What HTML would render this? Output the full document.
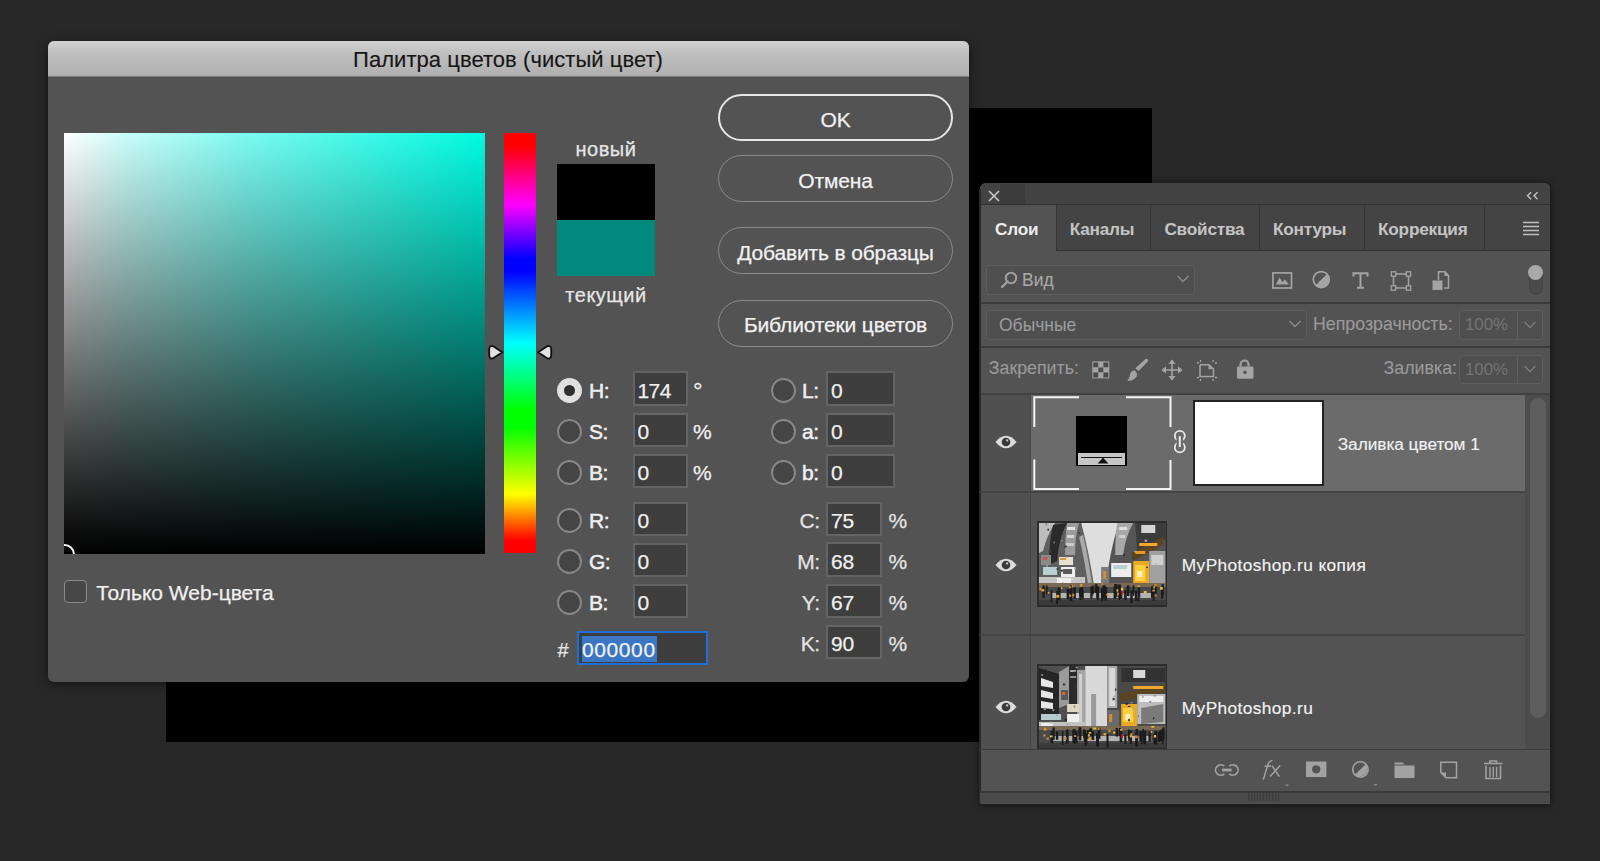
<!DOCTYPE html>
<html><head><meta charset="utf-8">
<style>
*{margin:0;padding:0;box-sizing:border-box}
html,body{width:1600px;height:861px;overflow:hidden;background:#282828;font-family:"Liberation Sans",sans-serif}
.a{position:absolute}
.t{position:absolute;white-space:nowrap;line-height:1}
</style></head><body>
<div class="a" style="left:166px;top:108px;width:986.00px;height:634.00px;background:#000"></div>
<div class="a" style="left:48px;top:41px;width:921px;height:641px;background:#535353;border-radius:6px;box-shadow:0 2px 12px rgba(0,0,0,.55)"></div>
<div class="a" style="left:48px;top:41px;width:921px;height:36px;background:linear-gradient(#d2d2d2,#bdbdbd 40%,#b0b0b0);border-radius:6px 6px 0 0;border-bottom:1px solid #7d7d7d"></div>
<div class="t" style="left:47.50px;top:49.48px;font-size:22px;color:#161616;letter-spacing:0.05px;-webkit-text-stroke:0.15px #161616;width:921px;text-align:center;">Палитра цветов (чистый цвет)</div>
<div class="a" style="left:64px;top:133px;width:421px;height:421px;background:linear-gradient(to top,#000,rgba(0,0,0,0)),linear-gradient(to right,#fff 0%,rgb(200,253,249) 15%,rgb(120,250,240) 45%,rgb(0,250,225) 100%);overflow:hidden"><div class="a" style="left:-10.5px;top:410.5px;width:21px;height:21px;border-radius:50%;border:2px solid #f4f4f4"></div></div>
<div class="a" style="left:504px;top:133px;width:32.00px;height:420.00px;background:linear-gradient(to bottom,#f00 0%,#f00 3%,#f0f 17%,#00f 30%,#00f 33%,#0ff 50%,#0f0 66%,#0f0 70%,#ff0 86%,#f00 97%,#f00 100%)"></div>
<svg class="a" style="left:486px;top:342px" width="70" height="20"><path d="M3.2 7.5 Q3.2 3.6 6.8 4 L16.3 10.3 L6.8 16.6 Q3.2 17 3.2 13.1 Z" fill="#e2e2e2" stroke="#111" stroke-width="1.8" stroke-linejoin="round"/><path d="M65.2 7.5 Q65.2 3.6 61.6 4 L52.1 10.3 L61.6 16.6 Q65.2 17 65.2 13.1 Z" fill="#e2e2e2" stroke="#111" stroke-width="1.8" stroke-linejoin="round"/></svg>
<div class="t" style="left:557.00px;top:138.67px;font-size:20px;color:#e6e6e6;letter-spacing:0.5px;-webkit-text-stroke:0.25px #e6e6e6;width:98px;text-align:center;">новый</div>
<div class="a" style="left:557px;top:164px;width:98.00px;height:56.00px;background:#000"></div>
<div class="a" style="left:557px;top:220px;width:98.00px;height:56.00px;background:#008a7d"></div>
<div class="t" style="left:537.00px;top:284.57px;font-size:20px;color:#e6e6e6;letter-spacing:0.5px;-webkit-text-stroke:0.25px #e6e6e6;width:138px;text-align:center;">текущий</div>
<div class="a" style="left:718px;top:94px;width:235px;height:47px;border:2px solid #e6e6e6;border-radius:24px"></div>
<div class="t" style="left:718.00px;top:108.82px;font-size:21px;color:#f2f2f2;letter-spacing:-0.15px;-webkit-text-stroke:0.25px #f2f2f2;width:235px;text-align:center;">OK</div>
<div class="a" style="left:718px;top:155px;width:235px;height:47px;border:1.8px solid #8a8a8a;border-radius:24px"></div>
<div class="t" style="left:718.00px;top:169.82px;font-size:21px;color:#f2f2f2;letter-spacing:-0.15px;-webkit-text-stroke:0.25px #f2f2f2;width:235px;text-align:center;">Отмена</div>
<div class="a" style="left:718px;top:227px;width:235px;height:47px;border:1.8px solid #8a8a8a;border-radius:24px"></div>
<div class="t" style="left:718.00px;top:241.82px;font-size:21px;color:#f2f2f2;letter-spacing:-0.15px;-webkit-text-stroke:0.25px #f2f2f2;width:235px;text-align:center;">Добавить в образцы</div>
<div class="a" style="left:718px;top:299.5px;width:235px;height:47px;border:1.8px solid #8a8a8a;border-radius:24px"></div>
<div class="t" style="left:718.00px;top:314.32px;font-size:21px;color:#f2f2f2;letter-spacing:-0.15px;-webkit-text-stroke:0.25px #f2f2f2;width:235px;text-align:center;">Библиотеки цветов</div>
<div class="a" style="left:556.8px;top:377.5px;width:25px;height:25px;border-radius:50%;background:#e0e0e0"></div>
<div class="a" style="left:563.8px;top:384.5px;width:11px;height:11px;border-radius:50%;background:#2e2e2e"></div>
<div class="t" style="left:589.00px;top:380.02px;font-size:21px;color:#f0f0f0;letter-spacing:-0.5px;-webkit-text-stroke:0.5px #f0f0f0;">H:</div>
<div class="a" style="left:632.5px;top:371.3px;width:55.5px;height:34.4px;background:#3e3e3e;border:2px solid #646464"></div>
<div class="t" style="left:637.50px;top:380.02px;font-size:21px;color:#f0f0f0;letter-spacing:-0.6px;-webkit-text-stroke:0.25px #f0f0f0;">174</div>
<div class="t" style="left:693.00px;top:379.48px;font-size:24px;color:#f0f0f0;-webkit-text-stroke:0.25px #f0f0f0;">°</div>
<div class="a" style="left:556.8px;top:418.5px;width:25px;height:25px;border-radius:50%;background:#454545;border:2px solid #878787"></div>
<div class="t" style="left:589.00px;top:421.02px;font-size:21px;color:#f0f0f0;letter-spacing:-0.5px;-webkit-text-stroke:0.5px #f0f0f0;">S:</div>
<div class="a" style="left:632.5px;top:413px;width:55.5px;height:34.4px;background:#3e3e3e;border:2px solid #646464"></div>
<div class="t" style="left:637.50px;top:421.02px;font-size:21px;color:#f0f0f0;letter-spacing:-0.6px;-webkit-text-stroke:0.25px #f0f0f0;">0</div>
<div class="t" style="left:693.00px;top:421.02px;font-size:21px;color:#f0f0f0;-webkit-text-stroke:0.25px #f0f0f0;">%</div>
<div class="a" style="left:556.8px;top:459.5px;width:25px;height:25px;border-radius:50%;background:#454545;border:2px solid #878787"></div>
<div class="t" style="left:589.00px;top:462.02px;font-size:21px;color:#f0f0f0;letter-spacing:-0.5px;-webkit-text-stroke:0.5px #f0f0f0;">B:</div>
<div class="a" style="left:632.5px;top:454px;width:55.5px;height:34.4px;background:#3e3e3e;border:2px solid #646464"></div>
<div class="t" style="left:637.50px;top:462.02px;font-size:21px;color:#f0f0f0;letter-spacing:-0.6px;-webkit-text-stroke:0.25px #f0f0f0;">0</div>
<div class="t" style="left:693.00px;top:462.02px;font-size:21px;color:#f0f0f0;-webkit-text-stroke:0.25px #f0f0f0;">%</div>
<div class="a" style="left:556.8px;top:507.5px;width:25px;height:25px;border-radius:50%;background:#454545;border:2px solid #878787"></div>
<div class="t" style="left:589.00px;top:509.82px;font-size:21px;color:#f0f0f0;letter-spacing:-0.5px;-webkit-text-stroke:0.5px #f0f0f0;">R:</div>
<div class="a" style="left:632.5px;top:501.6px;width:55.5px;height:34.4px;background:#3e3e3e;border:2px solid #646464"></div>
<div class="t" style="left:637.50px;top:509.82px;font-size:21px;color:#f0f0f0;letter-spacing:-0.6px;-webkit-text-stroke:0.25px #f0f0f0;">0</div>
<div class="a" style="left:556.8px;top:548.5px;width:25px;height:25px;border-radius:50%;background:#454545;border:2px solid #878787"></div>
<div class="t" style="left:589.00px;top:550.92px;font-size:21px;color:#f0f0f0;letter-spacing:-0.5px;-webkit-text-stroke:0.5px #f0f0f0;">G:</div>
<div class="a" style="left:632.5px;top:542.5px;width:55.5px;height:34.4px;background:#3e3e3e;border:2px solid #646464"></div>
<div class="t" style="left:637.50px;top:550.92px;font-size:21px;color:#f0f0f0;letter-spacing:-0.6px;-webkit-text-stroke:0.25px #f0f0f0;">0</div>
<div class="a" style="left:556.8px;top:589.5px;width:25px;height:25px;border-radius:50%;background:#454545;border:2px solid #878787"></div>
<div class="t" style="left:589.00px;top:591.82px;font-size:21px;color:#f0f0f0;letter-spacing:-0.5px;-webkit-text-stroke:0.5px #f0f0f0;">B:</div>
<div class="a" style="left:632.5px;top:583.6px;width:55.5px;height:34.4px;background:#3e3e3e;border:2px solid #646464"></div>
<div class="t" style="left:637.50px;top:591.82px;font-size:21px;color:#f0f0f0;letter-spacing:-0.6px;-webkit-text-stroke:0.25px #f0f0f0;">0</div>
<div class="a" style="left:770.5px;top:377.5px;width:25px;height:25px;border-radius:50%;background:#454545;border:2px solid #878787"></div>
<div class="t" style="left:802.00px;top:380.02px;font-size:21px;color:#f0f0f0;letter-spacing:-0.5px;-webkit-text-stroke:0.5px #f0f0f0;">L:</div>
<div class="a" style="left:826px;top:371.3px;width:69px;height:34.4px;background:#3e3e3e;border:2px solid #646464"></div>
<div class="t" style="left:831.00px;top:380.02px;font-size:21px;color:#f0f0f0;-webkit-text-stroke:0.25px #f0f0f0;">0</div>
<div class="a" style="left:770.5px;top:418.5px;width:25px;height:25px;border-radius:50%;background:#454545;border:2px solid #878787"></div>
<div class="t" style="left:802.00px;top:421.02px;font-size:21px;color:#f0f0f0;letter-spacing:-0.5px;-webkit-text-stroke:0.5px #f0f0f0;">a:</div>
<div class="a" style="left:826px;top:413px;width:69px;height:34.4px;background:#3e3e3e;border:2px solid #646464"></div>
<div class="t" style="left:831.00px;top:421.02px;font-size:21px;color:#f0f0f0;-webkit-text-stroke:0.25px #f0f0f0;">0</div>
<div class="a" style="left:770.5px;top:459.5px;width:25px;height:25px;border-radius:50%;background:#454545;border:2px solid #878787"></div>
<div class="t" style="left:802.00px;top:462.02px;font-size:21px;color:#f0f0f0;letter-spacing:-0.5px;-webkit-text-stroke:0.5px #f0f0f0;">b:</div>
<div class="a" style="left:826px;top:454px;width:69px;height:34.4px;background:#3e3e3e;border:2px solid #646464"></div>
<div class="t" style="left:831.00px;top:462.02px;font-size:21px;color:#f0f0f0;-webkit-text-stroke:0.25px #f0f0f0;">0</div>
<div class="t" style="left:700.00px;top:509.82px;font-size:21px;color:#e4e4e4;letter-spacing:-0.5px;-webkit-text-stroke:0.25px #e4e4e4;width:119.5px;text-align:right;">C:</div>
<div class="a" style="left:826.4px;top:501.5px;width:56px;height:34.4px;background:#3e3e3e;border:2px solid #646464"></div>
<div class="t" style="left:831.00px;top:509.82px;font-size:21px;color:#f0f0f0;letter-spacing:-0.3px;-webkit-text-stroke:0.25px #f0f0f0;">75</div>
<div class="t" style="left:888.50px;top:509.82px;font-size:21px;color:#e4e4e4;-webkit-text-stroke:0.25px #e4e4e4;">%</div>
<div class="t" style="left:700.00px;top:550.92px;font-size:21px;color:#e4e4e4;letter-spacing:-0.5px;-webkit-text-stroke:0.25px #e4e4e4;width:119.5px;text-align:right;">M:</div>
<div class="a" style="left:826.4px;top:542.3px;width:56px;height:34.4px;background:#3e3e3e;border:2px solid #646464"></div>
<div class="t" style="left:831.00px;top:550.92px;font-size:21px;color:#f0f0f0;letter-spacing:-0.3px;-webkit-text-stroke:0.25px #f0f0f0;">68</div>
<div class="t" style="left:888.50px;top:550.92px;font-size:21px;color:#e4e4e4;-webkit-text-stroke:0.25px #e4e4e4;">%</div>
<div class="t" style="left:700.00px;top:591.82px;font-size:21px;color:#e4e4e4;letter-spacing:-0.5px;-webkit-text-stroke:0.25px #e4e4e4;width:119.5px;text-align:right;">Y:</div>
<div class="a" style="left:826.4px;top:583.5px;width:56px;height:34.4px;background:#3e3e3e;border:2px solid #646464"></div>
<div class="t" style="left:831.00px;top:591.82px;font-size:21px;color:#f0f0f0;letter-spacing:-0.3px;-webkit-text-stroke:0.25px #f0f0f0;">67</div>
<div class="t" style="left:888.50px;top:591.82px;font-size:21px;color:#e4e4e4;-webkit-text-stroke:0.25px #e4e4e4;">%</div>
<div class="t" style="left:700.00px;top:633.22px;font-size:21px;color:#e4e4e4;letter-spacing:-0.5px;-webkit-text-stroke:0.25px #e4e4e4;width:119.5px;text-align:right;">K:</div>
<div class="a" style="left:826.4px;top:625px;width:56px;height:34.4px;background:#3e3e3e;border:2px solid #646464"></div>
<div class="t" style="left:831.00px;top:633.22px;font-size:21px;color:#f0f0f0;letter-spacing:-0.3px;-webkit-text-stroke:0.25px #f0f0f0;">90</div>
<div class="t" style="left:888.50px;top:633.22px;font-size:21px;color:#e4e4e4;-webkit-text-stroke:0.25px #e4e4e4;">%</div>
<div class="t" style="left:557.50px;top:640.07px;font-size:20px;color:#e4e4e4;-webkit-text-stroke:0.25px #e4e4e4;">#</div>
<div class="a" style="left:576.7px;top:630.7px;width:131.3px;height:34.5px;background:#3e3e3e;border:2px solid #1e6fdc"></div>
<div class="a" style="left:581.6px;top:636.2px;width:75.40px;height:25.80px;background:#3a76c3"></div>
<div class="t" style="left:582.00px;top:639.22px;font-size:21px;color:#f2f2f2;letter-spacing:0.6px;-webkit-text-stroke:0.25px #f2f2f2;">000000</div>
<div class="a" style="left:64px;top:580px;width:23px;height:23px;border-radius:4px;background:#474747;border:1.5px solid #8a8a8a"></div>
<div class="t" style="left:96.30px;top:581.72px;font-size:21px;color:#f0f0f0;-webkit-text-stroke:0.25px #f0f0f0;">Только Web-цвета</div>
<div class="a" style="left:980px;top:183px;width:570px;height:621px;background:#535353;border-radius:6px 6px 0 0;box-shadow:0 1px 8px rgba(0,0,0,.6);overflow:hidden"></div>
<div class="a" style="left:980px;top:182.5px;width:570.00px;height:22.50px;background:#434343;border-radius:6px 6px 0 0;border-bottom:1px solid #313131"></div>
<div class="a" style="left:1000px;top:184px;width:25.00px;height:20.00px;background:#3c3c3c"></div>
<svg class="a" style="left:986px;top:188px" width="16" height="16"><path d="M3 3 L13 13 M13 3 L3 13" stroke="#c8c8c8" stroke-width="1.6"/></svg>
<svg class="a" style="left:1525px;top:190px" width="16" height="12"><path d="M6 2.3 L2.5 5.8 L6 9.3 M12.5 2.3 L9 5.8 L12.5 9.3" stroke="#c8c8c8" stroke-width="1.3" fill="none"/></svg>
<div class="a" style="left:980px;top:205px;width:570.00px;height:46.00px;background:#444444;border-bottom:1px solid #333"></div>
<div class="a" style="left:980px;top:205px;width:75.60px;height:46.00px;background:#535353"></div>
<div class="a" style="left:1150.3px;top:205px;width:1.00px;height:45.00px;background:#363636"></div>
<div class="a" style="left:1259.4px;top:205px;width:1.00px;height:45.00px;background:#363636"></div>
<div class="a" style="left:1364.4px;top:205px;width:1.00px;height:45.00px;background:#363636"></div>
<div class="a" style="left:1484.4px;top:205px;width:1.00px;height:45.00px;background:#363636"></div>
<div class="a" style="left:1055.6px;top:205px;width:1.00px;height:46.00px;background:#363636"></div>
<div class="t" style="left:995.00px;top:221.14px;font-size:17.2px;color:#ececec;font-weight:700;letter-spacing:-0.2px;">Слои</div>
<div class="t" style="left:1069.70px;top:221.14px;font-size:17.2px;color:#c4c4c4;font-weight:700;letter-spacing:-0.2px;">Каналы</div>
<div class="t" style="left:1164.40px;top:221.14px;font-size:17.2px;color:#c4c4c4;font-weight:700;letter-spacing:-0.2px;">Свойства</div>
<div class="t" style="left:1273.00px;top:221.14px;font-size:17.2px;color:#c4c4c4;font-weight:700;letter-spacing:-0.2px;">Контуры</div>
<div class="t" style="left:1378.00px;top:221.14px;font-size:17.2px;color:#c4c4c4;font-weight:700;letter-spacing:-0.2px;">Коррекция</div>
<svg class="a" style="left:1522px;top:220px" width="18" height="16"><path d="M1 2.5 H17 M1 6.5 H17 M1 10.5 H17 M1 14.5 H17" stroke="#c0c0c0" stroke-width="1.5"/></svg>
<div class="a" style="left:980px;top:302.3px;width:570.00px;height:1.70px;background:#3b3b3b"></div>
<div class="a" style="left:980px;top:346.3px;width:570.00px;height:1.70px;background:#3b3b3b"></div>
<div class="a" style="left:986.4px;top:265px;width:208.6px;height:30px;border:1px solid #5e5e5e;border-radius:4px;background:#4f4f4f"></div>
<svg class="a" style="left:999px;top:270px" width="22" height="20"><circle cx="12" cy="8" r="5.2" stroke="#a0a0a0" stroke-width="2" fill="none"/><path d="M8.5 11.5 L3 17" stroke="#a0a0a0" stroke-width="2.4" stroke-linecap="round"/></svg>
<div class="t" style="left:1022.00px;top:271.69px;font-size:17.5px;color:#a8a8a8;-webkit-text-stroke:0.1px #a8a8a8;">Вид</div>
<svg class="a" style="left:1176px;top:274px" width="14" height="10"><path d="M1.5 2 L7 7.5 L12.5 2" stroke="#8a8a8a" stroke-width="1.4" fill="none"/></svg>
<svg class="a" style="left:1268px;top:266px" width="190" height="28"><rect x="4.9" y="6.9" width="18.6" height="15.1" stroke="#a4a4a4" stroke-width="1.7" fill="none"/><path d="M8 18.6 L11.5 11.6 L14.6 16.2 L16.8 13.2 L21 18.6 Z" fill="#a4a4a4"/><circle cx="53.3" cy="13.6" r="8" stroke="#a4a4a4" stroke-width="1.7" fill="none"/><path d="M59 7.9 A8 8 0 0 1 47.6 19.3 Z" fill="#a4a4a4"/><path d="M85.5 10.5 V7.2 H99.5 V10.5 M92.5 7.2 V21.5 M89 21.8 H96" stroke="#a4a4a4" stroke-width="2" fill="none"/><rect x="125.5" y="8" width="15" height="14" stroke="#a4a4a4" stroke-width="1.5" fill="none"/><rect x="123.3" y="5.8" width="4.4" height="4.4" fill="#535353" stroke="#a4a4a4" stroke-width="1.3"/><rect x="138.3" y="5.8" width="4.4" height="4.4" fill="#535353" stroke="#a4a4a4" stroke-width="1.3"/><rect x="123.3" y="19.8" width="4.4" height="4.4" fill="#535353" stroke="#a4a4a4" stroke-width="1.3"/><rect x="138.3" y="19.8" width="4.4" height="4.4" fill="#535353" stroke="#a4a4a4" stroke-width="1.3"/><path d="M170.5 14 V5.8 H177 L180.5 9.5 V22 H176" stroke="#a4a4a4" stroke-width="1.5" fill="none"/><path d="M176.5 5.8 V10 H180.5 Z" fill="#a4a4a4"/><rect x="164.5" y="14.5" width="10" height="9.5" fill="#a4a4a4"/></svg>
<div class="a" style="left:1528.5px;top:265.5px;width:14.5px;height:29px;border-radius:7.5px;background:#4a4a4a;border:1px solid #444"></div>
<div class="a" style="left:1528px;top:264.5px;width:15px;height:15px;border-radius:50%;background:#a9a9a9"></div>
<div class="a" style="left:986.4px;top:309.5px;width:320.6px;height:30px;border:1px solid #5e5e5e;border-radius:4px;background:#4f4f4f"></div>
<div class="t" style="left:999.00px;top:316.69px;font-size:17.5px;color:#9c9c9c;-webkit-text-stroke:0.1px #9c9c9c;">Обычные</div>
<svg class="a" style="left:1288px;top:319px" width="14" height="10"><path d="M1.5 2 L7 7.5 L12.5 2" stroke="#8a8a8a" stroke-width="1.4" fill="none"/></svg>
<div class="t" style="left:1313.00px;top:316.43px;font-size:17.8px;color:#9a9a9a;-webkit-text-stroke:0.1px #9a9a9a;">Непрозрачность:</div>
<div class="a" style="left:1459px;top:310px;width:84px;height:29.5px;border:1px solid #5e5e5e;border-radius:4px;background:#4f4f4f"></div>
<div class="a" style="left:1517.4px;top:311px;width:1.00px;height:27.50px;background:#5e5e5e"></div>
<div class="t" style="left:1465.00px;top:317.28px;font-size:16.8px;color:#747474;">100%</div>
<svg class="a" style="left:1523px;top:319.5px" width="14" height="10"><path d="M1.5 2 L7 7.5 L12.5 2" stroke="#7c7c7c" stroke-width="1.4" fill="none"/></svg>
<div class="t" style="left:988.80px;top:360.43px;font-size:17.8px;color:#9a9a9a;-webkit-text-stroke:0.1px #9a9a9a;">Закрепить:</div>
<div class="t" style="left:1383.60px;top:360.43px;font-size:17.8px;color:#9a9a9a;-webkit-text-stroke:0.1px #9a9a9a;">Заливка:</div>
<div class="a" style="left:1459px;top:354.8px;width:84px;height:29.5px;border:1px solid #5e5e5e;border-radius:4px;background:#4f4f4f"></div>
<div class="a" style="left:1517.4px;top:355.8px;width:1.00px;height:27.50px;background:#5e5e5e"></div>
<div class="t" style="left:1465.00px;top:362.08px;font-size:16.8px;color:#747474;">100%</div>
<svg class="a" style="left:1523px;top:364.3px" width="14" height="10"><path d="M1.5 2 L7 7.5 L12.5 2" stroke="#7c7c7c" stroke-width="1.4" fill="none"/></svg>
<svg class="a" style="left:1088px;top:356px" width="172" height="28"><rect x="4.3" y="5.4" width="17" height="17" fill="#a4a4a4"/><path d="M5.3 6.4 h4.9 v4.9 h-4.9 Z M15.4 6.4 h4.9 v4.9 h-4.9 Z M10.35 11.45 h4.9 v4.9 h-4.9 Z M5.3 16.5 h4.9 v4.9 h-4.9 Z M15.4 16.5 h4.9 v4.9 h-4.9 Z" fill="#4a4a4a"/><path d="M57.6 2.9 Q60.6 2.3 60 5.2 L50.6 15 L47.4 12.2 Z" fill="#a4a4a4"/><path d="M46.3 14.2 Q50 16.6 48.6 20.4 Q46.2 24.6 39.3 25 Q41.8 22.8 41.8 19.6 Q42 15.6 46.3 14.2 Z" fill="#a4a4a4"/><path d="M84 4 V24 M74 14 H94" stroke="#a4a4a4" stroke-width="1.6"/><path d="M84 3.5 L80.3 8 H87.7 Z M84 24.5 L80.3 20 H87.7 Z M73.5 14 L78 10.3 V17.7 Z M94.5 14 L90 10.3 V17.7 Z" fill="#a4a4a4"/><path d="M112 9 V20.5 H125.5 V13 L121 8.8 H112" stroke="#a4a4a4" stroke-width="1.5" fill="none"/><path d="M120.5 8.8 V13.2 H125.5 Z" fill="#a4a4a4"/><path d="M109 7 h2 M109 21.5 h2 M127 7 h2 M127 21.5 h2 M112.5 4 v2 M112.5 23 v2 M125 4 v2 M125 23 v2" stroke="#a4a4a4" stroke-width="1.3"/><path d="M152.5 10.5 V8.5 A4 4 0 0 1 160.5 8.5 V10.5" stroke="#a4a4a4" stroke-width="2.2" fill="none"/><rect x="149" y="10.5" width="16.5" height="12.3" rx="1.2" fill="#a4a4a4"/><circle cx="157" cy="16.3" r="1.7" fill="#535353"/></svg>
<svg width="0" height="0" style="position:absolute"><filter id="soft"><feGaussianBlur stdDeviation="0.45"/></filter></svg>
<div class="a" style="left:980px;top:393px;width:570.00px;height:1.50px;background:#414141"></div>
<div class="a" style="left:980px;top:394.5px;width:51.00px;height:96.50px;background:#505050"></div>
<div class="a" style="left:1031px;top:394.5px;width:494.00px;height:96.50px;background:#6b6b6b"></div>
<div class="a" style="left:980px;top:492.5px;width:50.00px;height:256.50px;background:#505050"></div>
<div class="a" style="left:1030px;top:394.5px;width:1.00px;height:354.50px;background:#474747"></div>
<div class="a" style="left:979px;top:189px;width:1.50px;height:615.00px;background:#2a2a2a"></div>
<div class="a" style="left:980px;top:491px;width:545.00px;height:1.50px;background:#444"></div>
<div class="a" style="left:980px;top:634px;width:545.00px;height:1.50px;background:#444"></div>
<div class="a" style="left:1525px;top:394.5px;width:25.00px;height:354.50px;background:#4c4c4c"></div>
<div class="a" style="left:1529.7px;top:397.5px;width:16px;height:320px;border-radius:8px;background:#5e5e5e"></div>
<svg class="a" style="left:993.8px;top:434.4px" width="24" height="16"><path d="M1.5 8 Q12 -4.6 22.5 8 Q12 20.6 1.5 8 Z" fill="#dcdcdc"/><circle cx="12" cy="8" r="4.3" fill="#3a3a3a"/><rect x="12.2" y="5.4" width="2" height="2" fill="#d0d0d0"/></svg>
<svg class="a" style="left:993.8px;top:556.5px" width="24" height="16"><path d="M1.5 8 Q12 -4.6 22.5 8 Q12 20.6 1.5 8 Z" fill="#dcdcdc"/><circle cx="12" cy="8" r="4.3" fill="#3a3a3a"/><rect x="12.2" y="5.4" width="2" height="2" fill="#d0d0d0"/></svg>
<svg class="a" style="left:993.8px;top:698.8px" width="24" height="16"><path d="M1.5 8 Q12 -4.6 22.5 8 Q12 20.6 1.5 8 Z" fill="#dcdcdc"/><circle cx="12" cy="8" r="4.3" fill="#3a3a3a"/><rect x="12.2" y="5.4" width="2" height="2" fill="#d0d0d0"/></svg>
<svg class="a" style="left:1032px;top:395px" width="141" height="96"><path d="M47 2.3 H2.3 V32 M2.3 64.5 V94 H47 M94 2.3 H138.5 V32 M138.5 65 V94 H94" stroke="#f4f4f4" stroke-width="2" fill="none"/></svg>
<div class="a" style="left:1076.3px;top:416px;width:50.40px;height:50.40px;background:#000"></div>
<div class="a" style="left:1078px;top:453.4px;width:47.20px;height:11.40px;background:#c6c6c6"></div>
<div class="a" style="left:1081.2px;top:457px;width:40.60px;height:1.40px;background:#111"></div>
<svg class="a" style="left:1096px;top:456px" width="14" height="9"><path d="M7 1.5 L12.3 7.6 H1.7 Z" fill="#111"/></svg>
<svg class="a" style="left:1172px;top:428px" width="16" height="28"><circle cx="7.8" cy="7.8" r="5" stroke="#ebebeb" stroke-width="1.8" fill="none"/><circle cx="7.8" cy="19.4" r="5" stroke="#ebebeb" stroke-width="1.8" fill="none"/><rect x="4.5" y="10.5" width="6.6" height="6.2" fill="#6b6b6b"/><path d="M7.8 8.2 V19" stroke="#ebebeb" stroke-width="2"/></svg>
<div class="a" style="left:1193.3px;top:399.8px;width:130.30px;height:85.90px;background:#fff;border:2px solid #222"></div>
<div class="t" style="left:1337.70px;top:435.96px;font-size:17.3px;color:#f2f2f2;letter-spacing:-0.05px;-webkit-text-stroke:0.15px #f2f2f2;">Заливка цветом 1</div>
<div class="a" style="left:1037.2px;top:521.2px;width:130.3px;height:86px;overflow:hidden"><svg class="a" style="left:0px;top:0px" width="130.3" height="86" viewBox="0 0 130 86" preserveAspectRatio="none"><defs><filter id="sf0" x="0" y="0" width="1" height="1"><feGaussianBlur stdDeviation="0.5"/></filter></defs><rect x="0" y="0" width="130" height="86" fill="#2c2c2c"/><g filter="url(#sf0)"><rect x="2.0" y="2.0" width="126.0" height="82.0" fill="#6a6a6a"/><path d="M44 2 H82 Q74 30 68 72 H58 Q52 30 44 2 Z" fill="#dedede"/><path d="M2 2 H44 Q50 30 56 72 H2 Z" fill="#5e5e5e"/><path d="M2 2 H18 Q10 14 6 30 L2 32 Z" fill="#bdbdbd"/><path d="M16 4 L30 2 Q22 16 20 40 L12 44 Q12 20 16 4 Z" fill="#2c2c2c"/><path d="M30 2 H42 Q38 14 38 34 H28 Q28 16 30 2 Z" fill="#9c9c9c"/><rect x="30.0" y="6.0" width="8.0" height="3.0" fill="#e4e4e4"/><rect x="30.0" y="14.0" width="7.0" height="3.0" fill="#d6d6d6"/><rect x="29.0" y="22.0" width="8.0" height="3.0" fill="#c8c8c8"/><path d="M46 14 Q52 40 56 72 H52 Q48 40 42 16 Z" fill="#aaaaaa"/><rect x="4.0" y="34.0" width="10.0" height="10.0" fill="#8a8a8a"/><rect x="6.0" y="36.0" width="4.0" height="3.0" fill="#d05050"/><rect x="22.0" y="36.0" width="14.0" height="8.0" fill="#e6e0d0"/><rect x="23.0" y="37.0" width="6.0" height="2.0" fill="#d89a40"/><rect x="24.0" y="46.0" width="14.0" height="10.0" fill="#f0f0f0"/><rect x="26.0" y="48.0" width="9.0" height="5.0" fill="#5a5a5a"/><rect x="6.0" y="46.0" width="14.0" height="8.0" fill="#b8d0d0"/><rect x="2.0" y="56.0" width="46.0" height="8.0" fill="#c6c6c6"/><rect x="20.0" y="57.0" width="14.0" height="5.0" fill="#eeeeee"/><path d="M82 2 H128 V72 H68 Q72 30 82 2 Z" fill="#545454"/><path d="M80 2 H96 Q88 16 86 34 H78 Q78 16 80 2 Z" fill="#a8a8a8"/><rect x="82.0" y="6.0" width="8.0" height="3.0" fill="#e0e0e0"/><rect x="82.0" y="14.0" width="6.0" height="3.0" fill="#cfcfcf"/><path d="M98 2 H128 V18 L100 30 Z" fill="#3a3a3a"/><rect x="104.0" y="4.0" width="14.0" height="8.0" fill="#d4d4d4"/><path d="M94 32 L126 16 V24 L96 40 Z" fill="#5a4420"/><rect x="102.0" y="22.0" width="18.0" height="3.0" fill="#f0a830"/><rect x="98.0" y="30.0" width="10.0" height="3.0" fill="#e89828"/><rect x="74.0" y="42.0" width="20.0" height="14.0" fill="#eeeeee"/><rect x="76.0" y="44.0" width="14.0" height="4.0" fill="#b8d2d2"/><rect x="96.0" y="40.0" width="16.0" height="26.0" fill="#e8aa28"/><rect x="98.0" y="44.0" width="10.0" height="16.0" fill="#ffd040"/><rect x="100.0" y="50.0" width="5.0" height="6.0" fill="#fbeec0"/><rect x="112.0" y="30.0" width="16.0" height="36.0" fill="#a0a0a0"/><rect x="114.0" y="34.0" width="12.0" height="10.0" fill="#cfcfcf"/><rect x="64.0" y="46.0" width="8.0" height="22.0" fill="#7a7a7a"/><rect x="66.0" y="50.0" width="3.0" height="8.0" fill="#d09030"/><rect x="41.5" y="11.1" width="1.1" height="1.8" fill="#2a2a2a"/><rect x="13.1" y="27.5" width="2.4" height="1.9" fill="#2a2a2a"/><rect x="29.0" y="35.4" width="1.4" height="1.2" fill="#8a8a8a"/><rect x="16.4" y="20.5" width="1.2" height="1.9" fill="#8a8a8a"/><rect x="24.9" y="7.8" width="1.8" height="1.9" fill="#2a2a2a"/><rect x="96.8" y="29.9" width="1.5" height="1.4" fill="#b0b0b0"/><rect x="23.9" y="48.8" width="1.9" height="1.8" fill="#2a2a2a"/><rect x="108.8" y="45.8" width="1.9" height="1.1" fill="#3c3c3c"/><rect x="43.7" y="58.0" width="1.1" height="2.0" fill="#b0b0b0"/><rect x="95.3" y="36.4" width="1.5" height="1.5" fill="#3c3c3c"/><rect x="10.4" y="7.6" width="1.7" height="2.0" fill="#3c3c3c"/><rect x="9.4" y="44.1" width="1.4" height="1.6" fill="#b0b0b0"/><rect x="83.6" y="3.4" width="1.5" height="1.9" fill="#b0b0b0"/><rect x="37.1" y="46.3" width="1.6" height="2.3" fill="#b0b0b0"/><rect x="11.8" y="29.0" width="2.3" height="2.2" fill="#3c3c3c"/><rect x="107.4" y="18.7" width="2.5" height="2.0" fill="#b0b0b0"/><rect x="12.1" y="11.1" width="1.0" height="2.2" fill="#8a8a8a"/><rect x="24.2" y="18.9" width="1.6" height="1.6" fill="#8a8a8a"/><rect x="86.2" y="32.9" width="1.7" height="2.3" fill="#2a2a2a"/><rect x="118.1" y="42.8" width="1.6" height="1.6" fill="#b0b0b0"/><rect x="25.3" y="61.1" width="1.2" height="1.5" fill="#b0b0b0"/><rect x="8.4" y="2.0" width="1.8" height="2.4" fill="#8a8a8a"/><rect x="27.4" y="24.6" width="2.4" height="1.9" fill="#3c3c3c"/><rect x="19.6" y="47.0" width="1.7" height="2.0" fill="#3c3c3c"/><rect x="2.0" y="64.0" width="126.0" height="20.0" fill="#4a4a4a"/><rect x="2.0" y="62.0" width="126.0" height="4.0" fill="#7a6a52"/><rect x="14.0" y="72.0" width="100.0" height="5.0" fill="#b4b4b4"/><rect x="2.0" y="79.0" width="126.0" height="5.0" fill="#3a3a3a"/><rect x="65.5" y="64.4" width="2.9" height="10.2" fill="#1e1e1e"/><rect x="86.9" y="69.4" width="2.6" height="9.8" fill="#1e1e1e"/><rect x="81.1" y="63.6" width="2.8" height="11.1" fill="#1e1e1e"/><rect x="113.7" y="65.5" width="1.8" height="11.2" fill="#1e1e1e"/><rect x="63.8" y="67.5" width="2.4" height="12.7" fill="#1e1e1e"/><rect x="95.3" y="64.4" width="1.9" height="10.4" fill="#1e1e1e"/><rect x="100.8" y="64.4" width="2.2" height="12.4" fill="#1e1e1e"/><rect x="123.7" y="68.5" width="2.2" height="9.2" fill="#1e1e1e"/><rect x="76.4" y="65.4" width="2.7" height="12.3" fill="#1e1e1e"/><rect x="45.0" y="69.8" width="1.6" height="8.6" fill="#1e1e1e"/><rect x="59.8" y="65.4" width="2.2" height="13.9" fill="#1e1e1e"/><rect x="77.1" y="63.0" width="2.9" height="10.1" fill="#1e1e1e"/><rect x="81.1" y="68.8" width="1.7" height="10.3" fill="#1e1e1e"/><rect x="89.5" y="64.4" width="2.8" height="10.6" fill="#1e1e1e"/><rect x="80.2" y="63.6" width="2.9" height="12.3" fill="#1e1e1e"/><rect x="59.0" y="68.2" width="1.6" height="9.0" fill="#1e1e1e"/><rect x="124.2" y="63.2" width="2.4" height="10.8" fill="#1e1e1e"/><rect x="82.7" y="67.3" width="2.4" height="10.8" fill="#1e1e1e"/><rect x="117.3" y="64.1" width="2.3" height="8.1" fill="#1e1e1e"/><rect x="100.3" y="68.1" width="1.7" height="12.5" fill="#1e1e1e"/><rect x="19.1" y="69.9" width="1.8" height="13.2" fill="#1e1e1e"/><rect x="5.4" y="64.5" width="2.3" height="12.6" fill="#1e1e1e"/><rect x="42.1" y="66.8" width="2.8" height="8.4" fill="#1e1e1e"/><rect x="93.0" y="69.3" width="2.5" height="12.9" fill="#1e1e1e"/><rect x="65.6" y="68.8" width="2.8" height="8.8" fill="#1e1e1e"/><rect x="20.7" y="66.6" width="2.8" height="12.7" fill="#1e1e1e"/><rect x="76.9" y="68.4" width="1.7" height="8.8" fill="#1e1e1e"/><rect x="78.1" y="63.8" width="1.6" height="12.1" fill="#1e1e1e"/><rect x="67.3" y="66.4" width="2.7" height="13.3" fill="#1e1e1e"/><rect x="9.0" y="64.3" width="1.6" height="8.6" fill="#1e1e1e"/><rect x="57.6" y="63.2" width="2.8" height="8.4" fill="#1e1e1e"/><rect x="42.1" y="69.8" width="2.4" height="9.2" fill="#1e1e1e"/><rect x="36.1" y="66.6" width="2.7" height="11.0" fill="#1e1e1e"/><rect x="32.5" y="66.7" width="2.8" height="13.6" fill="#1e1e1e"/><rect x="115.5" y="69.2" width="1.8" height="10.7" fill="#1e1e1e"/><rect x="53.2" y="65.7" width="2.0" height="12.0" fill="#1e1e1e"/><rect x="54.7" y="64.5" width="2.0" height="8.7" fill="#1e1e1e"/><rect x="97.6" y="69.6" width="2.5" height="10.2" fill="#1e1e1e"/><rect x="33.1" y="64.0" width="2.2" height="12.5" fill="#1e1e1e"/><rect x="13.6" y="69.2" width="1.7" height="12.0" fill="#1e1e1e"/><rect x="29.5" y="67.9" width="3.0" height="10.4" fill="#1e1e1e"/><rect x="53.8" y="65.5" width="1.6" height="10.2" fill="#1e1e1e"/><rect x="43.6" y="66.2" width="2.6" height="10.3" fill="#1e1e1e"/><rect x="65.6" y="65.1" width="2.9" height="8.7" fill="#1e1e1e"/><rect x="115.0" y="64.6" width="2.8" height="8.5" fill="#1e1e1e"/><rect x="35.4" y="72.9" width="1.8" height="2.6" fill="#c88a30"/><rect x="106.5" y="70.1" width="2.9" height="2.1" fill="#f0c040"/><rect x="115.1" y="68.8" width="2.6" height="1.6" fill="#e0a030"/><rect x="100.3" y="64.2" width="2.8" height="1.9" fill="#e0a030"/><rect x="80.0" y="71.6" width="1.6" height="2.8" fill="#e0a030"/><rect x="34.5" y="63.5" width="1.5" height="3.0" fill="#c88a30"/><rect x="116.0" y="65.2" width="1.7" height="2.3" fill="#e0a030"/><rect x="117.4" y="73.6" width="1.9" height="1.8" fill="#c88a30"/><rect x="79.3" y="68.4" width="1.8" height="2.2" fill="#f0c040"/><rect x="23.9" y="66.2" width="1.5" height="1.9" fill="#e0a030"/><rect x="4.3" y="68.1" width="3.0" height="2.3" fill="#e0a030"/><rect x="117.0" y="63.3" width="2.7" height="2.1" fill="#c88a30"/><rect x="69.1" y="72.7" width="3.0" height="2.0" fill="#e0a030"/><rect x="122.8" y="66.1" width="2.7" height="2.6" fill="#f0c040"/><rect x="19.2" y="73.9" width="3.0" height="2.8" fill="#e0a030"/><rect x="10.7" y="70.9" width="1.9" height="1.7" fill="#e0a030"/><rect x="83.8" y="66.6" width="2.3" height="3.0" fill="#f0c040"/><rect x="31.8" y="65.5" width="2.2" height="1.7" fill="#c88a30"/><rect x="2.4" y="66.4" width="2.0" height="3.0" fill="#c88a30"/><rect x="32.1" y="73.6" width="2.0" height="2.0" fill="#e0a030"/><rect x="43.2" y="63.0" width="1.9" height="2.5" fill="#e0a030"/><rect x="64.1" y="62.1" width="1.9" height="1.6" fill="#c88a30"/><rect x="84.0" y="70.0" width="2.0" height="4.0" fill="#c02030"/></g></svg>
</div>
<div class="a" style="left:1037.2px;top:664px;width:130.3px;height:85px;overflow:hidden"><svg class="a" style="left:0px;top:0px" width="130.3" height="86" viewBox="0 0 130 86" preserveAspectRatio="none"><defs><filter id="sf1" x="0" y="0" width="1" height="1"><feGaussianBlur stdDeviation="0.5"/></filter></defs><rect x="0" y="0" width="130" height="86" fill="#2c2c2c"/><g filter="url(#sf1)"><rect x="2.0" y="2.0" width="126.0" height="82.0" fill="#6a6a6a"/><rect x="48.0" y="2.0" width="22.0" height="64.0" fill="#d8d8d8"/><path d="M2 2 H48 V68 H2 Z" fill="#505050"/><path d="M2 4 L22 10 L22 52 L2 56 Z" fill="#262626"/><path d="M4 14 L16 18 L16 24 L4 22 Z M4 26 L16 29 L16 35 L4 33 Z M4 37 L16 39 L16 45 L4 44 Z" fill="#e6e6e6"/><path d="M22 8 L32 2 V40 L22 44 Z" fill="#9a9a9a"/><rect x="24.0" y="26.0" width="7.0" height="10.0" fill="#5a5a5a"/><rect x="25.0" y="28.0" width="3.0" height="3.0" fill="#e06030"/><rect x="32.0" y="2.0" width="8.0" height="38.0" fill="#2a2a2a"/><rect x="33.0" y="6.0" width="6.0" height="2.0" fill="#a8a8a8"/><rect x="33.0" y="12.0" width="6.0" height="2.0" fill="#909090"/><rect x="40.0" y="6.0" width="8.0" height="60.0" fill="#a4a4a4"/><rect x="42.0" y="10.0" width="3.0" height="50.0" fill="#d0d0d0"/><rect x="30.0" y="40.0" width="12.0" height="8.0" fill="#e0d6c0"/><rect x="30.0" y="50.0" width="12.0" height="8.0" fill="#eeeeee"/><rect x="4.0" y="50.0" width="20.0" height="6.0" fill="#b6cccc"/><rect x="2.0" y="58.0" width="46.0" height="8.0" fill="#c2c2c2"/><rect x="4.0" y="59.0" width="12.0" height="5.0" fill="#ececec"/><rect x="54.0" y="30.0" width="5.0" height="36.0" fill="#9a9a9a"/><rect x="70.0" y="2.0" width="58.0" height="70.0" fill="#4a4a4a"/><rect x="70.0" y="2.0" width="10.0" height="42.0" fill="#a8a8a8"/><rect x="72.0" y="4.0" width="6.0" height="38.0" fill="#d8d8d8"/><rect x="84.0" y="4.0" width="44.0" height="14.0" fill="#333333"/><rect x="96.0" y="6.0" width="12.0" height="8.0" fill="#d8d8d8"/><path d="M82 30 L128 20 V28 L84 38 Z" fill="#5a4420"/><rect x="96.0" y="22.0" width="30.0" height="3.0" fill="#f0a830"/><rect x="84.0" y="40.0" width="16.0" height="24.0" fill="#e8aa28"/><rect x="86.0" y="44.0" width="10.0" height="14.0" fill="#ffd040"/><rect x="88.0" y="50.0" width="5.0" height="6.0" fill="#fbeec0"/><rect x="100.0" y="30.0" width="28.0" height="30.0" fill="#bdbdbd"/><rect x="102.0" y="32.0" width="24.0" height="6.0" fill="#ececec"/><path d="M104 44 L126 40 V58 L104 60 Z" fill="#7a7a7a"/><rect x="70.0" y="46.0" width="12.0" height="22.0" fill="#6a6a6a"/><rect x="72.0" y="50.0" width="3.0" height="8.0" fill="#d09030"/><rect x="29.7" y="59.7" width="1.3" height="1.1" fill="#8a8a8a"/><rect x="18.7" y="50.7" width="1.6" height="1.0" fill="#8a8a8a"/><rect x="94.6" y="44.1" width="1.7" height="2.4" fill="#b0b0b0"/><rect x="90.6" y="41.8" width="2.5" height="1.1" fill="#2a2a2a"/><rect x="77.7" y="24.6" width="1.5" height="2.0" fill="#2a2a2a"/><rect x="112.0" y="36.9" width="1.9" height="1.8" fill="#8a8a8a"/><rect x="6.6" y="44.1" width="2.4" height="1.9" fill="#8a8a8a"/><rect x="90.9" y="54.9" width="1.8" height="2.3" fill="#3c3c3c"/><rect x="75.4" y="33.9" width="2.1" height="2.4" fill="#3c3c3c"/><rect x="104.9" y="32.2" width="1.5" height="1.5" fill="#8a8a8a"/><rect x="36.7" y="41.4" width="1.5" height="2.4" fill="#8a8a8a"/><rect x="38.1" y="15.2" width="1.6" height="1.6" fill="#2a2a2a"/><rect x="103.8" y="55.5" width="2.0" height="1.2" fill="#8a8a8a"/><rect x="115.8" y="53.1" width="1.3" height="2.1" fill="#2a2a2a"/><rect x="38.6" y="2.8" width="1.5" height="1.3" fill="#b0b0b0"/><rect x="37.2" y="7.7" width="2.0" height="2.1" fill="#2a2a2a"/><rect x="116.2" y="31.3" width="2.5" height="1.1" fill="#8a8a8a"/><rect x="4.1" y="10.4" width="2.0" height="1.2" fill="#b0b0b0"/><rect x="38.5" y="21.5" width="1.0" height="2.3" fill="#3c3c3c"/><rect x="27.6" y="54.5" width="2.3" height="2.3" fill="#2a2a2a"/><rect x="100.6" y="51.0" width="1.3" height="2.5" fill="#8a8a8a"/><rect x="75.9" y="31.8" width="2.2" height="1.6" fill="#b0b0b0"/><rect x="15.2" y="45.3" width="2.1" height="1.8" fill="#8a8a8a"/><rect x="13.0" y="57.7" width="2.2" height="1.7" fill="#b0b0b0"/><rect x="8.2" y="4.9" width="1.2" height="2.1" fill="#2a2a2a"/><rect x="88.4" y="38.7" width="2.0" height="2.2" fill="#2a2a2a"/><rect x="93.4" y="38.0" width="1.8" height="1.5" fill="#8a8a8a"/><rect x="25.9" y="19.4" width="2.4" height="2.1" fill="#3c3c3c"/><rect x="2.0" y="64.0" width="126.0" height="20.0" fill="#4a4a4a"/><rect x="2.0" y="62.0" width="126.0" height="4.0" fill="#7a6a52"/><rect x="14.0" y="72.0" width="100.0" height="5.0" fill="#b4b4b4"/><rect x="2.0" y="79.0" width="126.0" height="5.0" fill="#3a3a3a"/><rect x="116.1" y="69.9" width="1.8" height="9.8" fill="#1e1e1e"/><rect x="69.3" y="69.8" width="2.1" height="13.6" fill="#1e1e1e"/><rect x="106.6" y="66.6" width="2.4" height="13.7" fill="#1e1e1e"/><rect x="98.3" y="65.1" width="2.8" height="9.2" fill="#1e1e1e"/><rect x="47.5" y="69.7" width="2.8" height="9.9" fill="#1e1e1e"/><rect x="37.7" y="67.3" width="2.8" height="12.1" fill="#1e1e1e"/><rect x="117.1" y="68.1" width="2.7" height="11.6" fill="#1e1e1e"/><rect x="46.5" y="66.0" width="2.2" height="11.2" fill="#1e1e1e"/><rect x="105.1" y="64.9" width="1.6" height="12.4" fill="#1e1e1e"/><rect x="35.3" y="65.9" width="1.7" height="13.0" fill="#1e1e1e"/><rect x="35.7" y="65.0" width="2.7" height="11.0" fill="#1e1e1e"/><rect x="36.1" y="69.2" width="2.1" height="10.2" fill="#1e1e1e"/><rect x="120.7" y="68.5" width="2.6" height="9.5" fill="#1e1e1e"/><rect x="102.0" y="67.2" width="2.7" height="10.2" fill="#1e1e1e"/><rect x="98.0" y="68.6" width="2.1" height="11.9" fill="#1e1e1e"/><rect x="98.0" y="70.0" width="2.9" height="12.7" fill="#1e1e1e"/><rect x="18.8" y="67.3" width="2.5" height="8.5" fill="#1e1e1e"/><rect x="58.9" y="69.1" width="2.9" height="13.6" fill="#1e1e1e"/><rect x="13.4" y="67.2" width="2.8" height="11.9" fill="#1e1e1e"/><rect x="41.4" y="63.3" width="2.9" height="13.2" fill="#1e1e1e"/><rect x="82.4" y="65.6" width="2.7" height="12.9" fill="#1e1e1e"/><rect x="91.1" y="67.2" width="2.0" height="9.8" fill="#1e1e1e"/><rect x="46.0" y="65.3" width="2.3" height="8.7" fill="#1e1e1e"/><rect x="90.7" y="65.4" width="1.7" height="9.5" fill="#1e1e1e"/><rect x="49.9" y="66.0" width="2.7" height="8.6" fill="#1e1e1e"/><rect x="29.4" y="65.1" width="1.8" height="12.5" fill="#1e1e1e"/><rect x="15.4" y="63.4" width="2.3" height="12.4" fill="#1e1e1e"/><rect x="103.5" y="66.9" width="2.0" height="13.3" fill="#1e1e1e"/><rect x="92.5" y="66.4" width="2.3" height="13.6" fill="#1e1e1e"/><rect x="124.7" y="69.5" width="1.7" height="10.0" fill="#1e1e1e"/><rect x="52.2" y="64.2" width="2.6" height="8.4" fill="#1e1e1e"/><rect x="111.2" y="67.1" width="2.4" height="10.5" fill="#1e1e1e"/><rect x="117.2" y="67.0" width="2.8" height="13.5" fill="#1e1e1e"/><rect x="87.1" y="69.9" width="2.2" height="10.2" fill="#1e1e1e"/><rect x="105.8" y="66.7" width="2.0" height="12.1" fill="#1e1e1e"/><rect x="60.5" y="63.9" width="2.8" height="11.0" fill="#1e1e1e"/><rect x="121.5" y="66.7" width="2.9" height="9.7" fill="#1e1e1e"/><rect x="28.8" y="66.7" width="2.7" height="12.9" fill="#1e1e1e"/><rect x="81.6" y="63.9" width="2.1" height="8.2" fill="#1e1e1e"/><rect x="47.7" y="69.6" width="2.0" height="12.2" fill="#1e1e1e"/><rect x="78.4" y="64.0" width="2.5" height="8.5" fill="#1e1e1e"/><rect x="24.7" y="67.1" width="1.7" height="13.8" fill="#1e1e1e"/><rect x="54.3" y="67.4" width="2.9" height="8.6" fill="#1e1e1e"/><rect x="124.9" y="63.3" width="2.4" height="11.9" fill="#1e1e1e"/><rect x="123.3" y="65.5" width="2.9" height="11.9" fill="#1e1e1e"/><rect x="60.6" y="64.0" width="1.9" height="2.0" fill="#c88a30"/><rect x="116.7" y="71.0" width="2.1" height="2.6" fill="#f0c040"/><rect x="6.7" y="63.7" width="2.6" height="2.8" fill="#c88a30"/><rect x="9.5" y="73.5" width="2.3" height="2.2" fill="#c88a30"/><rect x="71.1" y="65.6" width="2.5" height="2.7" fill="#c88a30"/><rect x="93.2" y="69.0" width="1.9" height="2.8" fill="#c88a30"/><rect x="51.6" y="68.0" width="2.5" height="1.6" fill="#f0c040"/><rect x="56.0" y="63.6" width="3.0" height="1.7" fill="#f0c040"/><rect x="75.9" y="67.5" width="2.2" height="2.1" fill="#f0c040"/><rect x="66.4" y="69.1" width="2.7" height="2.3" fill="#e0a030"/><rect x="12.9" y="71.5" width="2.6" height="1.8" fill="#f0c040"/><rect x="51.3" y="73.4" width="2.7" height="2.9" fill="#e0a030"/><rect x="6.5" y="70.6" width="1.8" height="2.0" fill="#e0a030"/><rect x="92.5" y="70.9" width="2.4" height="2.5" fill="#e0a030"/><rect x="7.4" y="64.6" width="2.0" height="1.6" fill="#e0a030"/><rect x="114.1" y="62.0" width="3.0" height="1.6" fill="#f0c040"/><rect x="26.9" y="73.0" width="2.6" height="2.7" fill="#c88a30"/><rect x="113.4" y="67.1" width="1.7" height="1.7" fill="#f0c040"/><rect x="97.8" y="71.4" width="2.6" height="2.9" fill="#c88a30"/><rect x="82.8" y="65.0" width="2.5" height="1.8" fill="#e0a030"/><rect x="37.0" y="71.2" width="2.0" height="1.7" fill="#e0a030"/><rect x="50.8" y="70.3" width="1.9" height="2.3" fill="#f0c040"/><rect x="84.0" y="70.0" width="2.0" height="4.0" fill="#c02030"/></g></svg>
</div>
<div class="t" style="left:1181.80px;top:557.06px;font-size:17.3px;color:#f2f2f2;letter-spacing:0.4px;-webkit-text-stroke:0.15px #f2f2f2;">MyPhotoshop.ru копия</div>
<div class="t" style="left:1181.80px;top:700.16px;font-size:17.3px;color:#f2f2f2;letter-spacing:0.4px;-webkit-text-stroke:0.15px #f2f2f2;">MyPhotoshop.ru</div>
<div class="a" style="left:980px;top:748.5px;width:570.00px;height:1.50px;background:#3e3e3e"></div>
<div class="a" style="left:980px;top:790.5px;width:570.00px;height:2.00px;background:#3a3a3a"></div>
<div class="a" style="left:980px;top:792.5px;width:570.00px;height:10.50px;background:#4b4b4b"></div>
<svg class="a" style="left:1247px;top:793px" width="34" height="8"><path d="M1.5 0 V8 M4.5 0 V8 M7.5 0 V8 M10.5 0 V8 M13.5 0 V8 M16.5 0 V8 M19.5 0 V8 M22.5 0 V8 M25.5 0 V8 M28.5 0 V8 M31.5 0 V8" stroke="#3a3a3a" stroke-width="1.2"/></svg>
<svg class="a" style="left:1210px;top:756px" width="300" height="32"><path d="M14.3 10.2 A5.2 5.2 0 1 0 14.3 17.8 M19.3 10.2 A5.2 5.2 0 1 1 19.3 17.8" stroke="#a2a2a2" stroke-width="1.7" fill="none"/><path d="M12 14 H21.6" stroke="#a2a2a2" stroke-width="2.8"/><path d="M53.3 23.6 L57.8 9 Q58.8 5 62.4 4.6 M54.6 10.2 H61 M60 20.6 L70.2 9.6 M62 9.6 L69.3 20.6" stroke="#a2a2a2" stroke-width="1.5" fill="none"/><path d="M75 28.5 h4 l-2 2 Z" fill="#8a8a8a"/><path d="M96 5.5 H116.4 V21 H96 Z" fill="#a2a2a2"/><circle cx="106.2" cy="13.3" r="4.1" fill="#535353"/><circle cx="150.4" cy="13.4" r="7.7" stroke="#a2a2a2" stroke-width="1.6" fill="none"/><path d="M155.8 8 A7.7 7.7 0 0 1 145 18.8 Z" fill="#a2a2a2"/><path d="M163.6 28 h4 l-2 2 Z" fill="#8a8a8a"/><path d="M184.5 6.5 H193 L194.5 8.5 H184.5 Z" fill="#a2a2a2"/><path d="M184.5 9.5 H204.5 V22 H184.5 Z" fill="#a2a2a2"/><path d="M230.8 6.3 H246.5 V21.8 H236 L230.8 16.5 Z" stroke="#a2a2a2" stroke-width="1.5" fill="none"/><path d="M230.8 16.5 H236 V21.8 Z" fill="#a2a2a2"/><path d="M274 7.5 H292.5 M280 7.5 V5 H286.5 V7.5" stroke="#a2a2a2" stroke-width="1.6" fill="none"/><path d="M276 9.5 V22.5 H290.5 V9.5" stroke="#a2a2a2" stroke-width="1.6" fill="none"/><path d="M280 11 V21 M283.3 11 V21 M286.6 11 V21" stroke="#a2a2a2" stroke-width="1.4"/></svg>

</body></html>
